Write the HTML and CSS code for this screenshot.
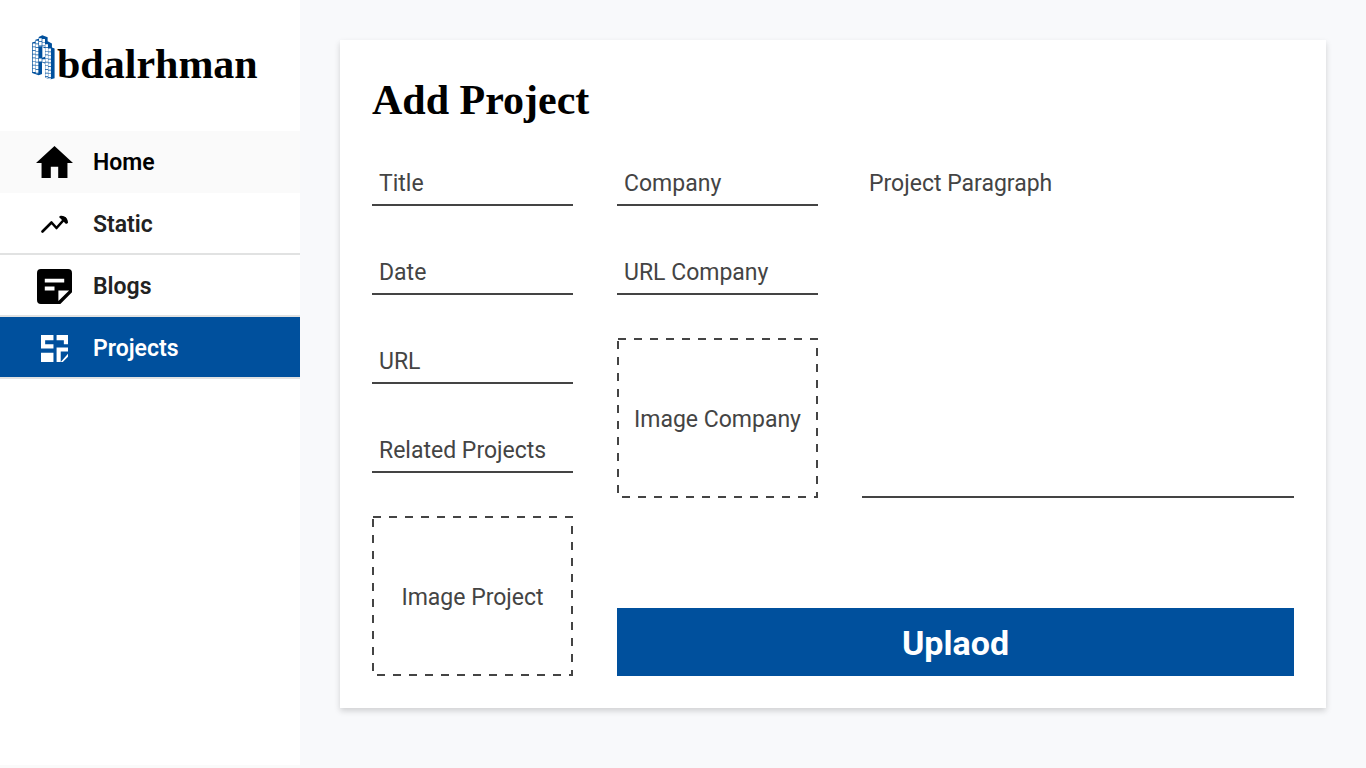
FILE: index.html
```html
<!DOCTYPE html>
<html lang="en">
<head>
<meta charset="utf-8">
<meta name="viewport" content="width=device-width, initial-scale=1">
<title>Add Project</title>
<link rel="stylesheet" href="styles.css">
</head>
<body>
<div class="app">
  <aside class="sidebar">
    <a class="logo" href="#">
      <svg class="logo-mark" viewBox="33 28 75 136" aria-hidden="true">
        <path fill="#00509d" d="M36 51 46 48V42L56 39V34L67 29 83 35V47L96 54V66L104 69V159L93 162 75 157V114L66 111V146L56 150 36 143Z"/>
        <path fill="#fff" d="M67 64 75 68V94L67 97Z"/>
        <g stroke="#fff" stroke-width="8" stroke-dasharray="9 2">
          <path d="M42 54V142M51 45V145M61 38V62M71 40V64M80 56V157M89 69V160M61 99V109M71 101V111"/>
        </g>
      </svg>
      <span>bdalrhman</span>
    </a>
    <nav class="nav" aria-label="Main">
      <a class="nav-item nav-item-hover" href="#">
        <svg class="icon icon-home" viewBox="2 3 20 17" preserveAspectRatio="none" aria-hidden="true"><path d="M10 20v-6h4v6h5v-8h3L12 3 2 12h3v8z"/></svg>
        <span>Home</span>
      </a>
      <a class="nav-item" href="#">
        <svg class="icon" viewBox="0 0 27 27" aria-hidden="true"><path d="M1.500 20.500 10.500 11.500 15.500 17 24 7.500" fill="none" stroke="#000" stroke-width="2.600" stroke-linejoin="round" stroke-linecap="round"/><path d="M19 5c4-1 8 2 8 7l-2 1-7-7z"/></svg>
        <span>Static</span>
      </a>
      <a class="nav-item" href="#">
        <svg class="icon icon-note" viewBox="3 3 18 18" aria-hidden="true"><path d="M19 3H5a2 2 0 0 0-2 2v14a2 2 0 0 0 2 2h10l6-6V5a2 2 0 0 0-2-2zM7 8h10v2H7zm5 6H7v-2h5zm2 5.500V14h5.500z"/></svg>
        <span>Blogs</span>
      </a>
      <a class="nav-item nav-item-active" href="#" aria-current="page">
        <svg class="icon" viewBox="0 0 26 26" aria-hidden="true"><path d="M0 0h12v5H4v4h8v4H0zM15 0h11v9h-4V5h-7zM0 17h12v9H0zM15 12h11v4h-7v10h-4zM26 18v3l-5 5h-2z"/></svg>
        <span>Projects</span>
      </a>
    </nav>
  </aside>
  <main class="main">
    <section class="card">
      <h1 class="title">Add Project</h1>
      <form class="form">
        <div class="column">
          <input class="field" type="text" placeholder="Title" aria-label="Title">
          <input class="field" type="text" placeholder="Date" aria-label="Date">
          <input class="field" type="text" placeholder="URL" aria-label="URL">
          <input class="field" type="text" placeholder="Related Projects" aria-label="Related Projects">
          <label class="drop">
            <svg class="dashes" aria-hidden="true"><rect x="1" y="1"/></svg>
            <input class="file" type="file">
            <span>Image Project</span>
          </label>
        </div>
        <div class="wide">
          <div class="wide-fields">
            <div class="column">
              <input class="field" type="text" placeholder="Company" aria-label="Company">
              <input class="field" type="text" placeholder="URL Company" aria-label="URL Company">
              <label class="drop">
                <svg class="dashes" aria-hidden="true"><rect x="1" y="1"/></svg>
                <input class="file" type="file">
                <span>Image Company</span>
              </label>
            </div>
            <textarea class="field paragraph" placeholder="Project Paragraph" aria-label="Project Paragraph"></textarea>
          </div>
          <button class="upload" type="button">Uplaod</button>
        </div>
      </form>
    </section>
  </main>
</div>
</body>
</html>
```
FILE: styles.css
```css
* { box-sizing: border-box; }

body {
  margin: 0;
  background: #f8f9fb;
  color: #000;
  font-family: Roboto, "Noto Sans", sans-serif;
}

.app {
  display: flex;
  align-items: stretch;
  min-height: 100vh;
}

.sidebar {
  flex: 0 0 300px;
  background: #fff;
  border-bottom: 3px solid #fafafa;
}

.logo {
  display: flex;
  align-items: flex-start;
  gap: 1px;
  height: 131px;
  padding: 35px 31px 0;
  color: #000;
  font: bold 42px/58px "Liberation Serif", serif;
  text-decoration: none;
}

.logo-mark {
  flex: none;
  width: 25px;
  height: 45px;
}

.nav-item {
  display: flex;
  align-items: center;
  gap: 20px;
  height: 62px;
  padding: 2px 0 0 36px;
  border-bottom: 2px solid #e1e2e2;
  color: #222;
  font-size: 23px;
  font-weight: 600;
  text-decoration: none;
}

.nav-item-hover {
  background: #fafafa;
  border-color: #fafafa;
  color: #000;
}

.nav-item-active {
  background: #00509d;
  color: #fff;
}

.icon {
  flex: none;
  width: 27px;
  height: 27px;
  margin: 0 5px;
  fill: #000;
}

.icon-home {
  width: 37px;
  height: 32px;
  margin: 0;
}

.icon-note {
  width: 35px;
  height: 35px;
  margin: 0 1px;
}

.nav-item-active .icon { fill: #fff; }

.main {
  flex: 1;
  min-width: 0;
  padding: 40px;
}

.card {
  padding: 32px;
  background: #fff;
  box-shadow: 0 3px 6px rgba(0, 0, 0, 0.16);
}

.title {
  margin: 0 0 32px;
  font: bold 42px/56px "Liberation Serif", serif;
}

.form {
  display: flex;
  gap: 44px;
}

.column {
  display: flex;
  flex: 0 0 201px;
  flex-direction: column;
  gap: 43px;
}

.wide {
  display: flex;
  flex: 1;
  flex-direction: column;
  justify-content: space-between;
  min-width: 0;
}

.wide-fields {
  display: flex;
  gap: 44px;
}

.field {
  width: 100%;
  height: 46px;
  padding: 2px 7px 0;
  border: 0;
  border-bottom: 2px solid #444;
  border-radius: 0;
  outline: 0;
  background: transparent;
  color: #444;
  font: 400 23px/28px Roboto, sans-serif;
}

.field::placeholder {
  color: #444;
  opacity: 1;
}

.paragraph {
  flex: 1;
  height: auto;
  min-width: 0;
  padding-top: 10px;
  resize: none;
}

.drop {
  position: relative;
  display: flex;
  align-items: center;
  justify-content: center;
  height: 160px;
  padding-top: 2px;
  color: #444;
  font-size: 23px;
  cursor: pointer;
}

.dashes {
  position: absolute;
  inset: 0;
  width: 100%;
  height: 100%;
}

.dashes rect {
  width: calc(100% - 2px);
  height: calc(100% - 2px);
  fill: none;
  stroke: #444;
  stroke-width: 2px;
  stroke-dasharray: 8 8;
}

.file {
  position: absolute;
  width: 1px;
  height: 1px;
  opacity: 0;
}

.upload {
  height: 68px;
  padding: 2px 0 0;
  border: 0;
  background: #00509d;
  color: #fff;
  font: 700 34px/40px Roboto, sans-serif;
  cursor: pointer;
}
```
